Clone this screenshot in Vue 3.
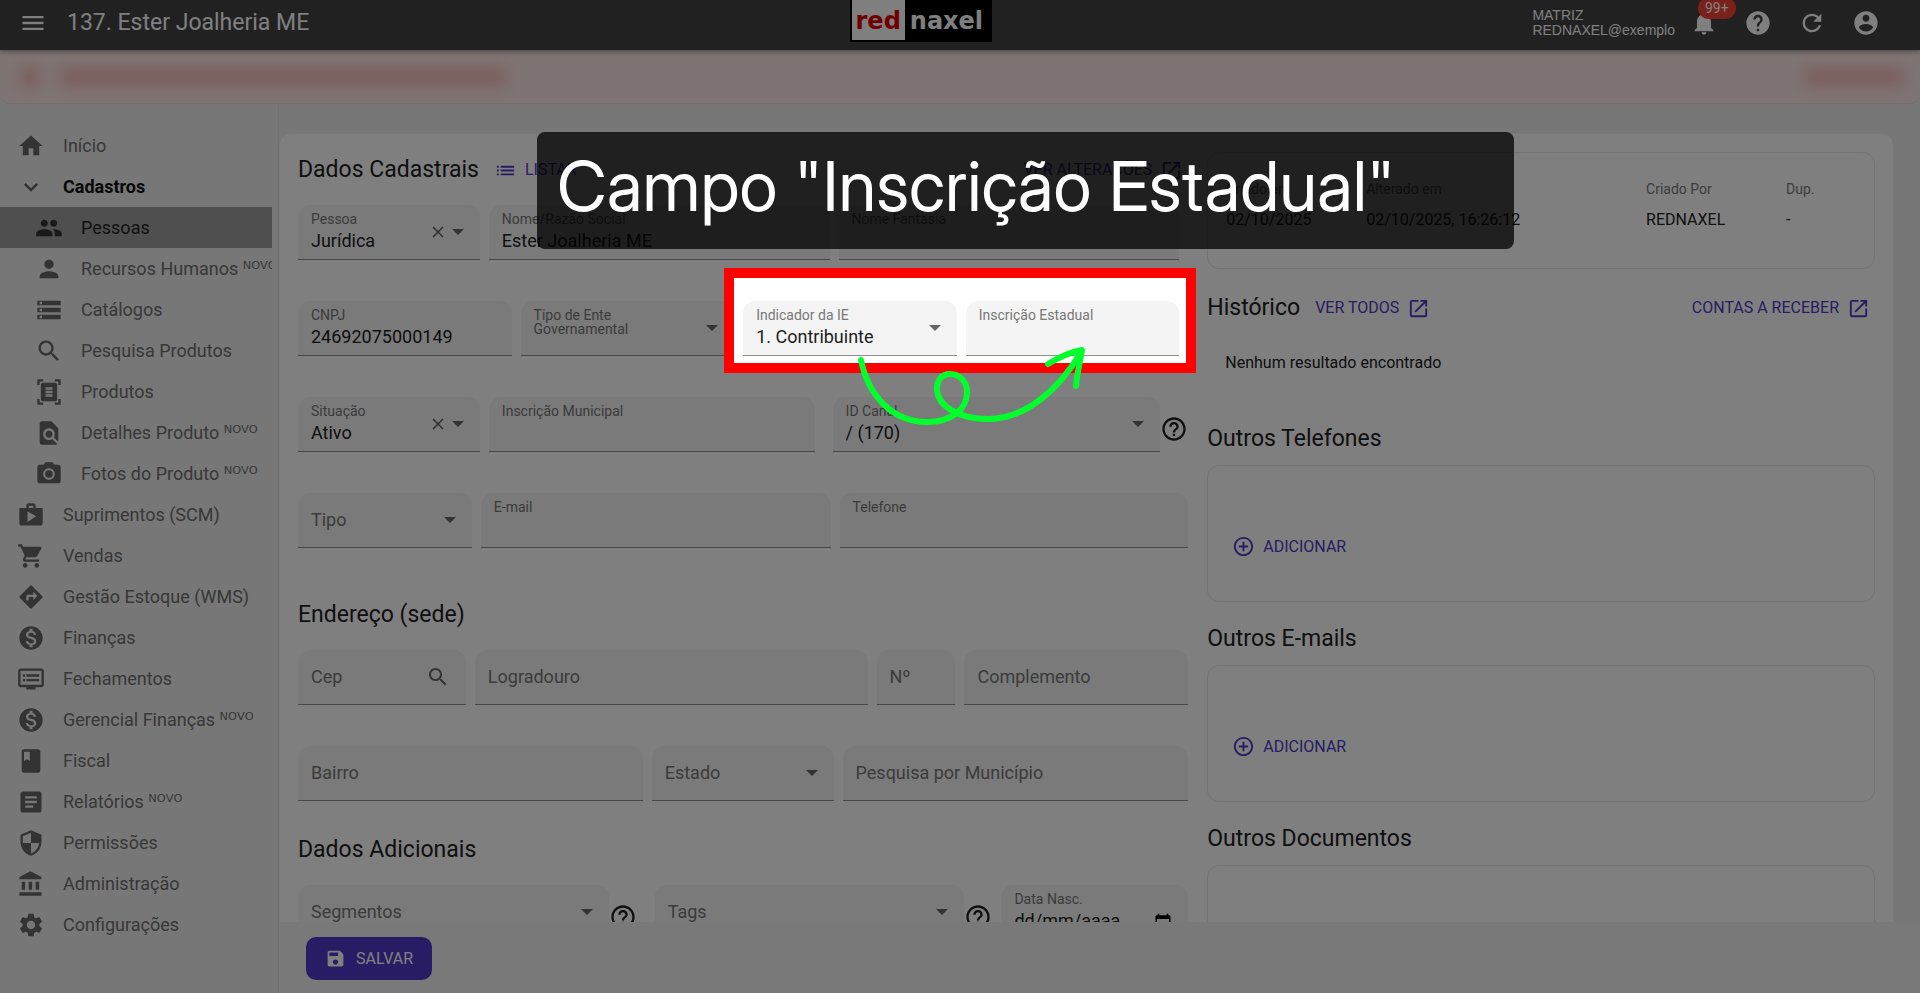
<template>
  <div class="app">
    <header class="topbar">
      <button class="icon-btn" aria-label="Menu">
        <svg class="icon" viewBox="0 0 24 24"><path :d="icons.menu" /></svg>
      </button>
      <h1>137. Ester Joalheria ME</h1>
      <a href="#" class="logo"><span class="logo-red">red</span><span class="logo-naxel">naxel</span></a>
      <div class="user">
        <div>MATRIZ</div>
        <div>REDNAXEL@exemplo</div>
      </div>
      <div class="actions">
        <button class="icon-btn" aria-label="Notificações">
          <svg class="icon" viewBox="0 0 24 24"><path :d="icons.bell" /></svg>
          <span class="badge">99+</span>
        </button>
        <button v-for="a in ['help', 'refresh', 'account']" :key="a" class="icon-btn" :aria-label="a">
          <svg class="icon" viewBox="0 0 24 24"><path :d="icons[a]" /></svg>
        </button>
      </div>
    </header>

    <!-- Aviso -->
    <div class="alert">
      <span class="smudge smudge-icon"></span>
      <span class="smudge smudge-text"></span>
      <span class="smudge smudge-action"></span>
    </div>

    <div class="body">
      <nav class="sidebar">
        <a
          v-for="m in menu"
          :key="m.label"
          href="#"
          :class="{ sub: m.sub, open: m.open, active: m.active }"
        >
          <svg class="icon" viewBox="0 0 24 24"><path :d="icons[m.icon]" /></svg>
          <span>{{ m.label }}<span v-if="m.novo" class="novo"> ᴺᴼⱽᴼ</span></span>
        </a>
      </nav>

      <main>
        <div class="scroll">
          <div class="card">
            <form class="left" @submit.prevent>
              <section v-for="s in sections" :key="s.title" :class="{ main: s.actions }">
                <div class="section-head">
                  <h2>{{ s.title }}</h2>
                  <template v-if="s.actions">
                    <button type="button" class="link-btn">
                      <svg class="icon-sm" viewBox="0 0 24 24"><path :d="icons.list" /></svg>
                      LISTAR
                    </button>
                    <button type="button" class="link-btn push inset-btn">
                      VER ALTERAÇÕES
                      <svg class="icon-sm" viewBox="0 0 24 24"><path :d="icons.open" /></svg>
                    </button>
                  </template>
                </div>
                <div
                  v-for="(row, i) in s.rows"
                  :key="i"
                  class="row"
                  :class="{ inset: row.inset }"
                  :style="{ gridTemplateColumns: columns(row) }"
                >
                  <div v-for="f in row.fields" :key="f.id" class="cell" :class="{ spaced: f.spaced }">
                    <div class="field" :class="{ resting: f.resting, 'is-select': f.options }">
                      <label :for="f.id">{{ f.label }}</label>
                      <select v-if="f.options" :id="f.id" v-model="f.value">
                        <option v-for="o in f.options" :key="o" :value="o">{{ o }}</option>
                      </select>
                      <input v-else :id="f.id" v-model="f.value" type="text" :placeholder="f.placeholder" />
                      <div class="trail">
                        <button v-if="f.clear" type="button" class="clear" aria-label="Limpar" @click="f.value = ''">
                          <svg viewBox="0 0 12 12"><path d="M1 1l10 10M11 1L1 11" /></svg>
                        </button>
                        <svg v-if="f.options" class="arrow" viewBox="0 0 12 6"><path d="M0 0h12L6 6z" /></svg>
                        <svg v-if="f.search" class="lens" viewBox="0 0 24 24"><path :d="icons.search" /></svg>
                        <svg v-if="f.date" class="calendar" viewBox="0 0 24 24"><path :d="icons.calendar" /></svg>
                      </div>
                    </div>
                    <button v-if="f.help" type="button" class="help" aria-label="Ajuda">
                      <svg class="icon" viewBox="0 0 24 24"><path :d="icons.helpOutline" /></svg>
                    </button>
                  </div>
                </div>
              </section>
            </form>

            <aside class="right">
              <dl class="panel meta">
                <div><dt>Criado em</dt><dd>02/10/2025</dd></div>
                <div><dt>Alterado em</dt><dd>02/10/2025, 16:26:12</dd></div>
                <div><dt>Criado Por</dt><dd>REDNAXEL</dd></div>
                <div><dt>Dup.</dt><dd>-</dd></div>
              </dl>

              <div class="history-head">
                <h2>Histórico</h2>
                <button class="link-btn">
                  VER TODOS
                  <svg class="icon-sm" viewBox="0 0 24 24"><path :d="icons.open" /></svg>
                </button>
                <button class="link-btn push">
                  CONTAS A RECEBER
                  <svg class="icon-sm" viewBox="0 0 24 24"><path :d="icons.open" /></svg>
                </button>
              </div>
              <p class="empty">Nenhum resultado encontrado</p>

              <template v-for="t in extras" :key="t">
                <h2 class="extra-title">{{ t }}</h2>
                <div class="panel extra">
                  <button class="link-btn">
                    <svg class="icon-sm" viewBox="0 0 24 24"><path :d="icons.add" /></svg>
                    ADICIONAR
                  </button>
                </div>
              </template>
            </aside>
          </div>
        </div>

        <footer>
          <button class="save">
            <svg viewBox="0 0 24 24"><path :d="icons.save" /></svg>
            SALVAR
          </button>
        </footer>
      </main>
    </div>

    <!-- Tutorial -->
    <div class="spotlight"></div>
    <div class="callout">Campo "Inscrição Estadual"</div>
    <svg class="pointer" viewBox="0 0 240 90">
      <path d="M11 20C18 55 42 82 77 82C102 82 117 69 117 52C117 42 110 34 100 34C91 34 86 41 87 51C89 66 108 79 138 79C175 79 209 50 231 12" />
      <path d="M198 24C208 18 220 12 232 10C230 22 227 34 226 46" />
    </svg>
  </div>
</template>

<script setup>
import { ref } from 'vue'

const icons = {
  menu: 'M3 18h18v-2H3v2zm0-5h18v-2H3v2zm0-7v2h18V6H3z',
  bell: 'M12 22c1.1 0 2-.9 2-2h-4c0 1.1.89 2 2 2zm6-6v-5c0-3.07-1.64-5.64-4.5-6.32V4c0-.83-.67-1.5-1.5-1.5s-1.5.67-1.5 1.5v.68C7.63 5.36 6 7.92 6 11v5l-2 2v1h16v-1l-2-2z',
  help: 'M12 2C6.48 2 2 6.48 2 12s4.48 10 10 10 10-4.48 10-10S17.52 2 12 2zm1 17h-2v-2h2v2zm2.07-7.75l-.9.92C13.45 12.9 13 13.5 13 15h-2v-.5c0-1.1.45-2.1 1.17-2.83l1.24-1.26c.37-.36.59-.86.59-1.41 0-1.1-.9-2-2-2s-2 .9-2 2H8c0-2.21 1.79-4 4-4s4 1.79 4 4c0 .88-.36 1.68-.93 2.25z',
  refresh: 'M17.65 6.35C16.2 4.9 14.21 4 12 4c-4.42 0-7.99 3.58-7.99 8s3.57 8 7.99 8c3.73 0 6.84-2.55 7.73-6h-2.08c-.82 2.33-3.04 4-5.65 4-3.31 0-6-2.69-6-6s2.69-6 6-6c1.66 0 3.14.69 4.22 1.78L13 11h7V4l-2.35 2.35z',
  account: 'M12 2C6.48 2 2 6.48 2 12s4.48 10 10 10 10-4.48 10-10S17.52 2 12 2zm0 3c1.66 0 3 1.34 3 3s-1.34 3-3 3-3-1.34-3-3 1.34-3 3-3zm0 14.2c-2.5 0-4.71-1.28-6-3.22.03-1.99 4-3.08 6-3.08 1.99 0 5.97 1.09 6 3.08-1.29 1.94-3.5 3.22-6 3.22z',
  home: 'M10 20v-6h4v6h5v-8h3L12 3 2 12h3v8z',
  expand: 'M16.59 8.59L12 13.17 7.41 8.59 6 10l6 6 6-6z',
  people: 'M16 11c1.66 0 2.99-1.34 2.99-3S17.66 5 16 5c-1.66 0-3 1.34-3 3s1.34 3 3 3zm-8 0c1.66 0 2.99-1.34 2.99-3S9.66 5 8 5C6.34 5 5 6.34 5 8s1.34 3 3 3zm0 2c-2.33 0-7 1.17-7 3.5V19h14v-2.5c0-2.33-4.67-3.5-7-3.5zm8 0c-.29 0-.62.02-.97.05 1.16.84 1.97 1.97 1.97 3.45V19h6v-2.5c0-2.33-4.67-3.5-7-3.5z',
  person: 'M12 12c2.21 0 4-1.79 4-4s-1.79-4-4-4-4 1.79-4 4 1.79 4 4 4zm0 2c-2.67 0-8 1.34-8 4v2h16v-2c0-2.66-5.33-4-8-4z',
  storage: 'M2 20h20v-4H2v4zm2-3h2v2H4v-2zM2 4v4h20V4H2zm4 3H4V5h2v2zm-4 7h20v-4H2v4zm2-3h2v2H4v-2z',
  search: 'M15.5 14h-.79l-.28-.27C15.41 12.59 16 11.11 16 9.5 16 5.91 13.09 3 9.5 3S3 5.91 3 9.5 5.91 16 9.5 16c1.61 0 3.09-.59 4.23-1.57l.27.28v.79l5 4.99L20.49 19l-4.99-5zm-6 0C7.01 14 5 11.99 5 9.5S7.01 5 9.5 5 14 7.01 14 9.5 11.99 14 9.5 14z',
  scanner: 'M7 3H4v3H2V1h5v2zm15 3V1h-5v2h3v3h2zM7 21H4v-3H2v5h5v-2zm13-3v3h-3v2h5v-5h-2zm-1 0c0 1.1-.9 2-2 2H7c-1.1 0-2-.9-2-2V6c0-1.1.9-2 2-2h10c1.1 0 2 .9 2 2v12zM15 8H9v2h6V8zm0 3H9v2h6v-2zm0 3H9v2h6v-2z',
  findPage: 'M20 19.59V8l-6-6H6c-1.1 0-1.99.9-1.99 2L4 20c0 1.1.89 2 1.99 2H18c.45 0 .85-.15 1.19-.4l-4.43-4.43c-.8.52-1.74.83-2.76.83-2.76 0-5-2.24-5-5s2.24-5 5-5 5 2.24 5 5c0 1.02-.31 1.96-.83 2.75L20 19.59zM9 13c0 1.66 1.34 3 3 3s3-1.34 3-3-1.34-3-3-3-3 1.34-3 3z',
  camera: 'M12 8.8a3.2 3.2 0 1 0 0 6.4 3.2 3.2 0 0 0 0-6.4zM9 2L7.17 4H4c-1.1 0-2 .9-2 2v12c0 1.1.9 2 2 2h16c1.1 0 2-.9 2-2V6c0-1.1-.9-2-2-2h-3.17L15 2H9zm3 15c-2.76 0-5-2.24-5-5s2.24-5 5-5 5 2.24 5 5-2.24 5-5 5z',
  shop: 'M16 6V4c0-1.11-.89-2-2-2h-4c-1.11 0-2 .89-2 2v2H2v13c0 1.11.89 2 2 2h16c1.11 0 2-.89 2-2V6h-6zm-6-2h4v2h-4V4zM9 18V9l7.5 4L9 18z',
  cart: 'M7 18c-1.1 0-1.99.9-1.99 2S5.9 22 7 22s2-.9 2-2-.9-2-2-2zM1 2v2h2l3.6 7.59-1.35 2.45c-.16.28-.25.61-.25.96 0 1.1.9 2 2 2h12v-2H7.42c-.14 0-.25-.11-.25-.25l.03-.12.9-1.63h7.45c.75 0 1.41-.41 1.75-1.03l3.58-6.49c.08-.14.12-.31.12-.48 0-.55-.45-1-1-1H5.21l-.94-2H1zm16 16c-1.1 0-1.99.9-1.99 2s.89 2 1.99 2 2-.9 2-2-.9-2-2-2z',
  directions: 'M21.71 11.29l-9-9c-.39-.39-1.02-.39-1.41 0l-9 9c-.39.39-.39 1.02 0 1.41l9 9c.39.39 1.02.39 1.41 0l9-9c.39-.38.39-1.01 0-1.41zM14 14.5V12h-4v3H8v-4c0-.55.45-1 1-1h5V7.5l3.5 3.5-3.5 3.5z',
  money: 'M12 2C6.48 2 2 6.48 2 12s4.48 10 10 10 10-4.48 10-10S17.52 2 12 2zm1.41 16.09V20h-2.67v-1.93c-1.71-.36-3.16-1.46-3.27-3.4h1.96c.1 1.05.82 1.87 2.65 1.87 1.96 0 2.4-.98 2.4-1.59 0-.83-.44-1.61-2.67-2.14-2.48-.6-4.18-1.62-4.18-3.67 0-1.72 1.39-2.84 3.11-3.21V4h2.67v1.95c1.86.45 2.79 1.86 2.85 3.39H14.3c-.05-1.11-.64-1.87-2.22-1.87-1.5 0-2.4.68-2.4 1.64 0 .84.65 1.39 2.67 1.91s4.18 1.39 4.18 3.91c-.01 1.83-1.38 2.83-3.12 3.16z',
  dvr: 'M21 3H3c-1.1 0-2 .9-2 2v12c0 1.1.9 2 2 2h5v2h8v-2h5c1.1 0 1.99-.9 1.99-2L23 5c0-1.1-.9-2-2-2zm0 14H3V5h18v12zm-2-9H8v2h11V8zm0 4H8v2h11v-2zM7 8H5v2h2V8zm0 4H5v2h2v-2z',
  book: 'M18 2H6c-1.1 0-2 .9-2 2v16c0 1.1.9 2 2 2h12c1.1 0 2-.9 2-2V4c0-1.1-.9-2-2-2zM6 4h5v8l-2.5-1.5L6 12V4z',
  article: 'M19 3H5c-1.1 0-2 .9-2 2v14c0 1.1.9 2 2 2h14c1.1 0 2-.9 2-2V5c0-1.1-.9-2-2-2zm-5 14H7v-2h7v2zm3-4H7v-2h10v2zm0-4H7V7h10v2z',
  security: 'M12 1L3 5v6c0 5.55 3.84 10.74 9 12 5.16-1.26 9-6.45 9-12V5l-9-4zm0 10.99h7c-.53 4.12-3.28 7.79-7 8.94V12H5V6.3l7-3.11v8.8z',
  bank: 'M4 10v7h3v-7H4zm6 0v7h3v-7h-3zM2 22h19v-3H2v3zm14-12v7h3v-7h-3zm-4.5-9L2 6v2h19V6l-9.5-5z',
  settings: 'M19.14 12.94c.04-.3.06-.61.06-.94 0-.32-.02-.64-.07-.94l2.03-1.58c.18-.14.23-.41.12-.61l-1.92-3.32c-.12-.22-.37-.29-.59-.22l-2.39.96c-.5-.38-1.03-.7-1.62-.94l-.36-2.54c-.04-.24-.24-.41-.48-.41h-3.84c-.24 0-.43.17-.47.41l-.36 2.54c-.59.24-1.13.57-1.62.94l-2.39-.96c-.22-.08-.47 0-.59.22L2.74 8.87c-.12.21-.08.47.12.61l2.03 1.58c-.05.3-.09.63-.09.94s.02.64.07.94l-2.03 1.58c-.18.14-.23.41-.12.61l1.92 3.32c.12.22.37.29.59.22l2.39-.96c.5.38 1.03.7 1.62.94l.36 2.54c.05.24.24.41.48.41h3.84c.24 0 .44-.17.47-.41l.36-2.54c.59-.24 1.13-.56 1.62-.94l2.39.96c.22.08.47 0 .59-.22l1.92-3.32c.12-.22.07-.47-.12-.61l-2.01-1.58zM12 15.6c-1.98 0-3.6-1.62-3.6-3.6s1.62-3.6 3.6-3.6 3.6 1.62 3.6 3.6-1.62 3.6-3.6 3.6z',
  list: 'M3 13h2v-2H3v2zm0 4h2v-2H3v2zm0-8h2V7H3v2zm4 4h14v-2H7v2zm0 4h14v-2H7v2zM7 7v2h14V7H7z',
  open: 'M19 19H5V5h7V3H5c-1.11 0-2 .9-2 2v14c0 1.1.89 2 2 2h14c1.1 0 2-.9 2-2v-7h-2v7zM14 3v2h3.59l-9.83 9.83 1.41 1.41L19 6.41V10h2V3h-7z',
  add: 'M13 7h-2v4H7v2h4v4h2v-4h4v-2h-4V7zm-1-5C6.48 2 2 6.48 2 12s4.48 10 10 10 10-4.48 10-10S17.52 2 12 2zm0 18c-4.41 0-8-3.59-8-8s3.59-8 8-8 8 3.59 8 8-3.59 8-8 8z',
  helpOutline: 'M11 18h2v-2h-2v2zm1-16C6.48 2 2 6.48 2 12s4.48 10 10 10 10-4.48 10-10S17.52 2 12 2zm0 18c-4.41 0-8-3.59-8-8s3.59-8 8-8 8 3.59 8 8-3.59 8-8 8zm0-14c-2.21 0-4 1.79-4 4h2c0-1.1.9-2 2-2s2 .9 2 2c0 2-3 1.75-3 5h2c0-2.25 3-2.5 3-5 0-2.21-1.79-4-4-4z',
  calendar: 'M20 3h-1V1h-2v2H7V1H5v2H4c-1.1 0-2 .9-2 2v16c0 1.1.9 2 2 2h16c1.1 0 2-.9 2-2V5c0-1.1-.9-2-2-2zm0 18H4V8h16v13z',
  save: 'M17 3H5c-1.11 0-2 .9-2 2v14c0 1.1.89 2 2 2h14c1.1 0 2-.9 2-2V7l-4-4zm-5 16c-1.66 0-3-1.34-3-3s1.34-3 3-3 3 1.34 3 3-1.34 3-3 3zm3-10H5V5h10v4z'
}

const menu = [
  { label: 'Início', icon: 'home' },
  { label: 'Cadastros', icon: 'expand', open: true },
  { label: 'Pessoas', icon: 'people', sub: true, active: true },
  { label: 'Recursos Humanos', icon: 'person', sub: true, novo: true },
  { label: 'Catálogos', icon: 'storage', sub: true },
  { label: 'Pesquisa Produtos', icon: 'search', sub: true },
  { label: 'Produtos', icon: 'scanner', sub: true },
  { label: 'Detalhes Produto', icon: 'findPage', sub: true, novo: true },
  { label: 'Fotos do Produto', icon: 'camera', sub: true, novo: true },
  { label: 'Suprimentos (SCM)', icon: 'shop' },
  { label: 'Vendas', icon: 'cart' },
  { label: 'Gestão Estoque (WMS)', icon: 'directions' },
  { label: 'Finanças', icon: 'money' },
  { label: 'Fechamentos', icon: 'dvr' },
  { label: 'Gerencial Finanças', icon: 'money', novo: true },
  { label: 'Fiscal', icon: 'book' },
  { label: 'Relatórios', icon: 'article', novo: true },
  { label: 'Permissões', icon: 'security' },
  { label: 'Administração', icon: 'bank' },
  { label: 'Configurações', icon: 'settings' }
]

// w = peso da coluna na linha
const sections = ref([
  {
    title: 'Dados Cadastrais',
    actions: true,
    rows: [
      {
        inset: true,
        fields: [
          { id: 'pessoa', label: 'Pessoa', value: 'Jurídica', options: ['', 'Jurídica', 'Física'], clear: true, w: 182 },
          { id: 'nome', label: 'Nome/Razão Social', value: 'Ester Joalheria ME', w: 341 },
          { id: 'fantasia', label: 'Nome Fantasia', value: '', w: 341 }
        ]
      },
      {
        inset: true,
        fields: [
          { id: 'cnpj', label: 'CNPJ', value: '24692075000149', w: 1 },
          { id: 'ente', label: 'Tipo de Ente Governamental', value: '', options: [''], w: 1 },
          { id: 'indicador', label: 'Indicador da IE', value: '1. Contribuinte', options: ['1. Contribuinte'], w: 1 },
          { id: 'ie', label: 'Inscrição Estadual', value: '', w: 1 }
        ]
      },
      {
        fields: [
          { id: 'situacao', label: 'Situação', value: 'Ativo', options: ['', 'Ativo', 'Inativo'], clear: true, w: 182 },
          { id: 'im', label: 'Inscrição Municipal', value: '', w: 326 },
          { id: 'canal', label: 'ID Canal', value: '/ (170)', options: ['/ (170)'], help: true, spaced: true, w: 365 }
        ]
      },
      {
        fields: [
          { id: 'tipo', label: 'Tipo', value: '', options: [''], resting: true, w: 174 },
          { id: 'email', label: 'E-mail', value: '', w: 350 },
          { id: 'telefone', label: 'Telefone', value: '', w: 349 }
        ]
      }
    ]
  },
  {
    title: 'Endereço (sede)',
    rows: [
      {
        fields: [
          { id: 'cep', label: 'Cep', value: '', resting: true, search: true, w: 168 },
          { id: 'logradouro', label: 'Logradouro', value: '', resting: true, w: 393 },
          { id: 'numero', label: 'Nº', value: '', resting: true, w: 79 },
          { id: 'complemento', label: 'Complemento', value: '', resting: true, w: 224 }
        ]
      },
      {
        fields: [
          { id: 'bairro', label: 'Bairro', value: '', resting: true, w: 345 },
          { id: 'estado', label: 'Estado', value: '', options: [''], resting: true, w: 182 },
          { id: 'municipio', label: 'Pesquisa por Município', value: '', resting: true, w: 346 }
        ]
      }
    ]
  },
  {
    title: 'Dados Adicionais',
    rows: [
      {
        fields: [
          { id: 'segmentos', label: 'Segmentos', value: '', options: [''], resting: true, help: true, w: 339 },
          { id: 'tags', label: 'Tags', value: '', options: [''], resting: true, help: true, spaced: true, w: 347 },
          { id: 'nascimento', label: 'Data Nasc.', value: '', placeholder: 'dd/mm/aaaa', date: true, w: 187 }
        ]
      }
    ]
  }
])

const extras = ['Outros Telefones', 'Outros E-mails', 'Outros Documentos']

const columns = (row) => row.fields.map(f => `minmax(0, ${f.w}fr)`).join(' ')
</script>

<style>
body {
  margin: 0;
  background: #eee;
}
</style>

<style scoped>
.app {
  position: relative;
  display: flex;
  flex-direction: column;
  height: 100vh;
  overflow: hidden;
  background: #eee;
  color: #212121;
  font-family: Roboto, 'DejaVu Sans', sans-serif;
  font-size: 18px;
}
* {
  box-sizing: border-box;
}
button,
input,
select {
  font-family: inherit;
  border: none;
  background: none;
  margin: 0;
  padding: 0;
}
button {
  cursor: pointer;
}
svg {
  display: block;
  fill: currentColor;
  flex: none;
}
h1,
h2,
p,
dl,
dd {
  margin: 0;
  font-weight: 400;
}
h1,
h2 {
  font-size: 23px;
  line-height: 28px;
}
.icon {
  width: 28px;
  height: 28px;
}
.icon-sm {
  width: 23px;
  height: 23px;
}

/* Topo */
.topbar {
  position: relative;
  z-index: 1;
  display: flex;
  align-items: center;
  height: 50px;
  flex: none;
  padding: 0 40px 4px 19px;
  background: #424242;
  color: #fff;
  box-shadow: 0 2px 5px rgba(0, 0, 0, 0.35);
}
.topbar h1 {
  margin-left: 20px;
}
.icon-btn {
  position: relative;
  color: inherit;
}
.logo {
  display: flex;
  align-self: flex-start;
  margin: 0 auto;
  height: 42px;
  padding: 0 4px 2px 2px;
  background: #000;
  font-family: 'DejaVu Sans', sans-serif;
  font-size: 24px;
  font-weight: 700;
  line-height: 42px;
  text-decoration: none;
}
.logo-red {
  padding: 0 4px;
  background: #fff;
  color: #e00000;
}
.logo-naxel {
  padding: 0 5px;
  color: #fff;
}
.user {
  font-family: 'Liberation Sans', sans-serif;
  font-size: 14px;
  line-height: 15px;
}
.actions {
  display: flex;
  gap: 26px;
  margin-left: 15px;
}
.badge {
  position: absolute;
  left: 8px;
  top: -12px;
  padding: 0 7px;
  border-radius: 12px;
  background: #f44336;
  color: #fff;
  font-size: 14px;
  line-height: 22px;
}

/* Aviso desfocado */
.alert {
  display: flex;
  align-items: center;
  flex: none;
  height: 54px;
  padding: 0 16px 0 20px;
  border-radius: 0 0 10px 10px;
  background: #fde9e6;
  border-bottom: 1px solid #ead8d6;
}
.smudge {
  height: 20px;
  background: #ee6a6e;
  opacity: 0.33;
  filter: blur(7px);
}
.smudge-icon {
  width: 20px;
}
.smudge-text {
  width: 446px;
  margin-left: 20px;
}
.smudge-action {
  width: 100px;
  margin-left: auto;
}

/* Menu lateral */
.body {
  display: flex;
  flex: 1;
  min-height: 0;
}
.sidebar {
  width: 272px;
  flex: none;
  padding-top: 21px;
  overflow: hidden;
}
.sidebar a {
  display: flex;
  align-items: center;
  gap: 18px;
  height: 41px;
  padding-left: 17px;
  color: #707070;
  text-decoration: none;
  white-space: nowrap;
}
.sidebar a.sub {
  padding-left: 35px;
}
.sidebar a.open {
  color: #111;
  font-weight: 700;
}
.sidebar .icon {
  color: #666;
}
.sidebar a.active {
  background: #9e9e9e;
  color: #212121;
}
.sidebar a.active .icon {
  color: #333;
}

/* Conteúdo */
main {
  display: flex;
  flex-direction: column;
  flex: 1;
  min-width: 0;
  margin-left: 6px;
  border-left: 1px solid #e4e4e4;
}
.scroll {
  flex: 1;
  min-height: 0;
  overflow: hidden;
  padding: 29px 26px 0 0;
}
.card {
  display: grid;
  grid-template-columns: minmax(0, 4fr) minmax(0, 3fr);
  gap: 19px;
  padding: 18px;
  border: 1px solid #f2f2f2;
  border-radius: 12px;
  background: #fff;
}
section.main {
  padding-bottom: 18px;
}
.section-head {
  display: flex;
  align-items: center;
  height: 36px;
  margin-bottom: 17px;
}
section + section .section-head {
  margin-top: -10px;
}
.link-btn {
  display: flex;
  align-items: center;
  gap: 8px;
  color: #4f3bc4;
  font-size: 16px;
  line-height: 24px;
}
.section-head .link-btn,
.history-head .link-btn {
  margin-left: 15px;
}
.section-head .push,
.history-head .push {
  margin-left: auto;
}
.inset-btn {
  margin-right: 5px;
}
.row {
  display: grid;
  gap: 9px;
  margin-bottom: 41px;
}
.row.inset {
  padding-right: 9px;
}
.cell {
  display: flex;
}
.cell.spaced {
  margin-left: 9px;
}
.field {
  display: grid;
  flex: 1;
  min-width: 0;
  height: 55px;
  border-bottom: 1px solid #8f8f8f;
  border-radius: 12px 12px 0 0;
  background: #f4f4f4;
}
.field > * {
  grid-area: 1 / 1;
}
.field label {
  align-self: start;
  padding: 7px 13px 0;
  color: #777;
  font-size: 14px;
  line-height: 14px;
  pointer-events: none;
}
.field.is-select label {
  padding-right: 56px;
}
.field.resting label {
  align-self: center;
  padding-top: 0;
  font-size: 18px;
  line-height: 24px;
}
.field input,
.field select {
  width: 100%;
  height: 100%;
  padding: 17px 13px 0;
  color: #212121;
  font-size: 18px;
  appearance: none;
  outline: none;
}
.field input::placeholder {
  color: #212121;
  opacity: 1;
}
.trail {
  display: flex;
  align-items: center;
  align-self: center;
  justify-self: end;
  gap: 8px;
  padding-right: 16px;
  color: #666;
  pointer-events: none;
}
.clear {
  color: #555;
  pointer-events: auto;
}
.clear svg {
  width: 12px;
  height: 12px;
  stroke: currentColor;
  stroke-width: 1.4;
}
.arrow {
  width: 12px;
  height: 6px;
}
.lens {
  width: 24px;
  height: 24px;
}
.calendar {
  width: 18px;
  height: 18px;
  margin-top: 20px;
  color: #000;
}
.help {
  padding-top: 9px;
  color: #212121;
}

/* Coluna direita */
.panel {
  border: 1px solid #e6e6e6;
  border-radius: 12px;
}
.meta {
  display: grid;
  grid-template-columns: 2fr 4fr 2fr 1fr;
  height: 117px;
  padding: 25px 18px;
}
.meta dt {
  color: #777;
  font-size: 14px;
  line-height: 22px;
}
.meta dd {
  margin-top: 10px;
  font-size: 16px;
  line-height: 20px;
  white-space: nowrap;
}
.history-head {
  display: flex;
  align-items: center;
  margin: 25px 5px 0 0;
}
.empty {
  margin: 30px 18px 0;
  font-size: 16px;
  line-height: 22px;
}
.extra-title {
  margin: 23px 0 12px;
}
.empty + .extra-title {
  margin-top: 51px;
}
.extra {
  display: flex;
  align-items: center;
  height: 137px;
  padding: 26px 24px 0;
}

.left h2,
.right h2 {
  color: #212121;
}

footer {
  height: 71px;
  flex: none;
  padding: 15px 27px;
  background: #f3f3f3;
}
.save {
  display: flex;
  align-items: center;
  gap: 10px;
  height: 43px;
  padding: 0 19px;
  border-radius: 10px;
  background: #513bc8;
  color: #fff;
  font-size: 16px;
}
.save svg {
  width: 21px;
  height: 21px;
}

/* Camada do tutorial */
.spotlight {
  position: absolute;
  z-index: 2;
  left: 724px;
  top: 268px;
  width: 472px;
  height: 105px;
  border: 10px solid #f00;
  box-shadow: 0 0 0 9999px rgba(0, 0, 0, 0.5);
  pointer-events: none;
}
.callout {
  position: absolute;
  z-index: 3;
  left: 537px;
  top: 132px;
  width: 977px;
  padding: 12px 20px 20px;
  border-radius: 8px;
  background: rgba(0, 0, 0, 0.75);
  color: #fff;
  font-family: 'Inter Display', Inter, sans-serif;
  font-size: 69px;
  font-variation-settings: 'opsz' 32;
  line-height: 85px;
  white-space: nowrap;
}
.pointer {
  position: absolute;
  z-index: 4;
  left: 850px;
  top: 340px;
  width: 240px;
  height: 90px;
  fill: none;
  stroke: #00ff2b;
  stroke-width: 6;
  stroke-linecap: round;
  stroke-linejoin: round;
  pointer-events: none;
}
</style>
